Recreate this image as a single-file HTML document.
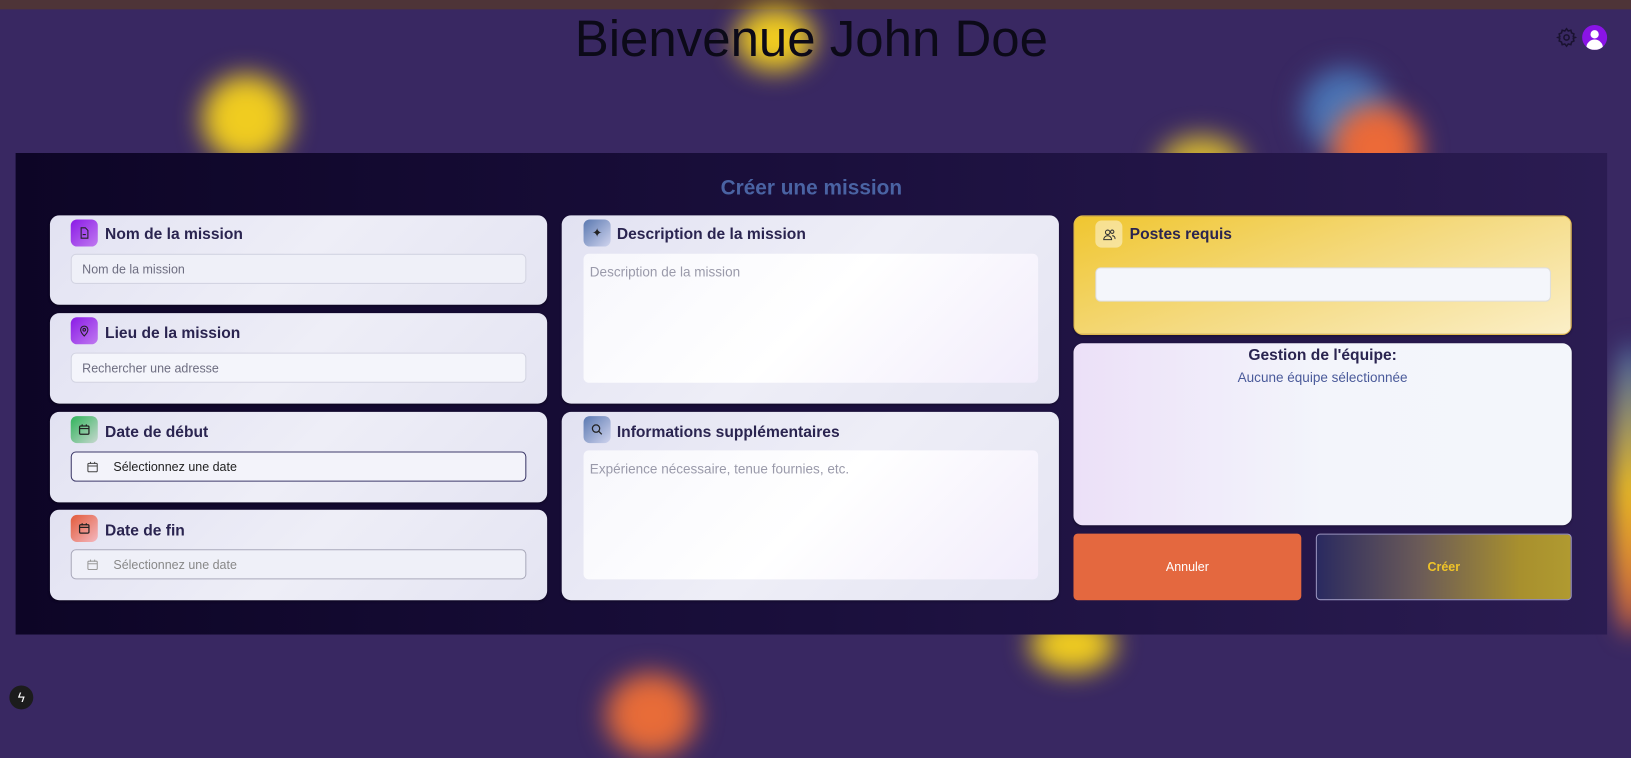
<!DOCTYPE html>
<html><head><meta charset="utf-8"><style>
*{box-sizing:border-box;margin:0;padding:0}
body{width:1631px;height:722px;overflow:hidden;background:#392862;font-family:"Liberation Sans",sans-serif;position:relative}
#w{position:absolute;left:0;top:0;width:1568px;height:694px;transform:scale(1.0402);transform-origin:0 0}
.topbar{position:absolute;left:0;top:0;width:1580px;height:9px;background:#4e3438}
.blob{position:absolute;border-radius:50%;filter:blur(12px)}
h1{position:absolute;top:10px;left:0;width:1560px;text-align:center;font-weight:400;font-size:49px;color:#0c0a18}
.panel{position:absolute;left:15px;top:147px;width:1530px;height:463px;background:linear-gradient(90deg,#0d0526 0%,#1a0f3c 50%,#2b1c52 100%)}
.ptitle{position:absolute;top:170px;left:15px;width:1530px;text-align:center;font-weight:700;font-size:20px;color:#4a63a3}
.card{position:absolute;border-radius:9px;background:linear-gradient(135deg,#e2e2f2,#eeeef7 50%,#e4e4f2);box-shadow:0 1px 2px rgba(0,0,0,.3)}
.ic{position:absolute;width:26px;height:26px;border-radius:6px;display:flex;align-items:center;justify-content:center}
.lbl{position:absolute;font-weight:700;font-size:15px;color:#2a2450}
.inp{position:absolute;border-radius:5px;border:1px solid #d3d4e2;background:#eff0f8;font-size:12px;color:#6d6d80;padding-left:10px;display:flex;align-items:center}
.ta{position:absolute;border-radius:5px;background:linear-gradient(135deg,#f7f7fc,#fff 50%,#f1ecfb);font-size:13px;color:#9a9aaa;padding:10px 6px}
</style></head><body><div id="w">
<div class="topbar"></div>
<div class="blob" style="left:192px;top:70px;width:90px;height:88px;background:radial-gradient(#f0cc20 55%,rgba(240,204,32,.3) 80%,transparent)"></div>
<div class="blob" style="left:705px;top:5px;width:80px;height:65px;background:radial-gradient(#f0cc20 50%,transparent)"></div>
<div class="blob" style="left:1112px;top:128px;width:86px;height:56px;background:radial-gradient(#d6b830 40%,transparent)"></div>
<div class="blob" style="left:1248px;top:62px;width:90px;height:90px;background:radial-gradient(#4a76b8 40%,transparent)"></div>
<div class="blob" style="left:1278px;top:98px;width:90px;height:90px;background:radial-gradient(#ec6a38 50%,transparent)"></div>
<div class="blob" style="left:988px;top:592px;width:86px;height:56px;background:radial-gradient(#f0cc20 50%,transparent)"></div>
<div class="blob" style="left:580px;top:645px;width:92px;height:84px;background:radial-gradient(#e86c38 50%,transparent)"></div>
<div class="blob" style="left:1548px;top:330px;width:40px;height:280px;background:linear-gradient(#4a76b8,#f0c020 50%,#ec6a38)"></div>
<h1>Bienvenue John Doe</h1>
<svg style="position:absolute;left:1496px;top:26px" width="20" height="20" viewBox="0 0 24 24" fill="none" stroke="#1a1230" stroke-width="1.8"><circle cx="12" cy="12" r="3"/><path d="M12 2l2 2.5 3-.8.8 3L20.5 8 19.8 11l2.2 1-2.2 1 .7 3-2.7 1.3-.8 3-3-.8L12 22l-2-2.5-3 .8-.8-3L3.5 16l.7-3L2 12l2.2-1-.7-3 2.7-1.3.8-3 3 .8z"/></svg>
<div style="position:absolute;left:1521px;top:24px;width:24px;height:24px;border-radius:50%;background:#8a14e6;overflow:hidden"><div style="position:absolute;left:8px;top:5px;width:8px;height:8px;border-radius:50%;background:#fff"></div><div style="position:absolute;left:4px;top:14px;width:16px;height:10px;border-radius:8px 8px 0 0;background:#fff"></div></div>
<div class="panel"></div>
<div class="ptitle">Créer une mission</div>

<div class="card" style="left:48px;top:207px;width:478px;height:86px"></div>
<div class="ic" style="left:68px;top:211px;background:linear-gradient(135deg,#8a1ae6,#c07af0)"><svg width="12" height="12" viewBox="0 0 24 24" fill="none" stroke="#222" stroke-width="2"><path d="M6 2h8l5 5v15H6z M9 15h6"/></svg></div>
<div class="lbl" style="left:101px;top:217px">Nom de la mission</div>
<div class="inp" style="left:68px;top:244px;width:438px;height:29px">Nom de la mission</div>

<div class="card" style="left:48px;top:301px;width:478px;height:87px"></div>
<div class="ic" style="left:68px;top:305px;background:linear-gradient(135deg,#8a1ae6,#c07af0)"><svg width="12" height="12" viewBox="0 0 24 24" fill="none" stroke="#222" stroke-width="2"><path d="M12 22s7-7 7-12a7 7 0 0 0-14 0c0 5 7 12 7 12z"/><circle cx="12" cy="10" r="2.5"/></svg></div>
<div class="lbl" style="left:101px;top:312px">Lieu de la mission</div>
<div class="inp" style="left:68px;top:339px;width:438px;height:29px;background:#f4f5fb">Rechercher une adresse</div>

<div class="card" style="left:48px;top:396px;width:478px;height:87px"></div>
<div class="ic" style="left:68px;top:400px;background:linear-gradient(135deg,#2fb35a,#c8d8d0)"><svg width="12" height="12" viewBox="0 0 24 24" fill="none" stroke="#222" stroke-width="2.4"><rect x="3" y="5" width="18" height="16" rx="2"/><path d="M3 10h18M8 2v4M16 2v4"/></svg></div>
<div class="lbl" style="left:101px;top:407px">Date de début</div>
<div class="inp" style="left:68px;top:434px;width:438px;height:29px;border-color:#3e3a6a;background:#f3f3fa;color:#222;padding-left:14px"><svg width="12" height="12" viewBox="0 0 24 24" fill="none" stroke="#444" stroke-width="2"><rect x="3" y="5" width="18" height="16" rx="2"/><path d="M3 10h18M8 2v4M16 2v4"/></svg><span style="margin-left:14px">Sélectionnez une date</span></div>

<div class="card" style="left:48px;top:490px;width:478px;height:87px"></div>
<div class="ic" style="left:68px;top:495px;background:linear-gradient(135deg,#e25a3a,#f4b8c0)"><svg width="12" height="12" viewBox="0 0 24 24" fill="none" stroke="#222" stroke-width="2.4"><rect x="3" y="5" width="18" height="16" rx="2"/><path d="M3 10h18M8 2v4M16 2v4"/></svg></div>
<div class="lbl" style="left:101px;top:502px">Date de fin</div>
<div class="inp" style="left:68px;top:528px;width:438px;height:29px;border-color:#aaaabb;color:#888;padding-left:14px"><svg width="12" height="12" viewBox="0 0 24 24" fill="none" stroke="#999" stroke-width="2"><rect x="3" y="5" width="18" height="16" rx="2"/><path d="M3 10h18M8 2v4M16 2v4"/></svg><span style="margin-left:14px">Sélectionnez une date</span></div>

<div class="card" style="left:540px;top:207px;width:478px;height:181px"></div>
<div class="ic" style="left:561px;top:211px;background:linear-gradient(135deg,#5a78b0,#d0d4ee)"><span style="font-size:12px;color:#222">✦</span></div>
<div class="lbl" style="left:593px;top:217px">Description de la mission</div>
<div class="ta" style="left:561px;top:244px;width:437px;height:124px">Description de la mission</div>

<div class="card" style="left:540px;top:396px;width:478px;height:181px"></div>
<div class="ic" style="left:561px;top:400px;background:linear-gradient(135deg,#5a78b0,#d0d4ee)"><svg width="12" height="12" viewBox="0 0 24 24" fill="none" stroke="#222" stroke-width="2.4"><circle cx="10" cy="10" r="7"/><path d="M15 15l6 6"/></svg></div>
<div class="lbl" style="left:593px;top:407px">Informations supplémentaires</div>
<div class="ta" style="left:561px;top:433px;width:437px;height:124px">Expérience nécessaire, tenue fournies, etc.</div>

<div class="card" style="left:1032px;top:207px;width:479px;height:115px;background:linear-gradient(160deg,#f0c630,#f4da80 50%,#fbefc8);border:1px solid #e0b850"></div>
<div class="ic" style="left:1053px;top:212px;background:rgba(255,255,255,.45)"><svg width="13" height="13" viewBox="0 0 24 24" fill="none" stroke="#333" stroke-width="1.8"><circle cx="9" cy="8" r="4"/><path d="M2 21a7 7 0 0 1 14 0z"/><circle cx="17" cy="7" r="3"/><path d="M17 14a5 5 0 0 1 5 6"/></svg></div>
<div class="lbl" style="left:1086px;top:217px">Postes requis</div>
<div class="inp" style="left:1053px;top:257px;width:438px;height:33px;background:#f4f6fb;border-color:#ddd"></div>

<div class="card" style="left:1032px;top:330px;width:479px;height:175px;background:linear-gradient(90deg,#ece0f8,#f3f5fb 50%,#f3f6fb)"></div>
<div style="position:absolute;left:1032px;top:333px;width:479px;text-align:center;font-weight:700;font-size:15px;color:#2a2450">Gestion de l'équipe:</div>
<div style="position:absolute;left:1032px;top:355px;width:479px;text-align:center;font-size:13px;color:#4a5a9a">Aucune équipe sélectionnée</div>

<div style="position:absolute;left:1032px;top:513px;width:219px;height:64px;border-radius:4px;background:#e4683f;color:#fff;font-size:12px;display:flex;align-items:center;justify-content:center">Annuler</div>
<div style="position:absolute;left:1265px;top:513px;width:246px;height:64px;border-radius:4px;border:1px solid #9a96c0;background:linear-gradient(90deg,#2a2a60,#6a5a58 40%,#a8902e 80%,#b09a30);color:#f0c428;font-size:12px;font-weight:700;display:flex;align-items:center;justify-content:center">Créer</div>

<div style="position:absolute;left:9px;top:659px;width:23px;height:23px;border-radius:50%;background:#1c1c1c;color:#fff;font-size:13px;display:flex;align-items:center;justify-content:center">ϟ</div>
</div></body></html>
